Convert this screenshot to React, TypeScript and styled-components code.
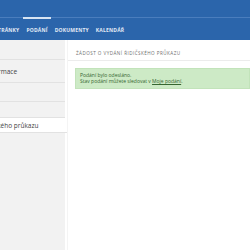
import React from "react";
import styled, { createGlobalStyle } from "styled-components";

const Global = createGlobalStyle`
  html, body { margin: 0; padding: 0; background: #ffffff; overflow: hidden; }
  body { font-family: "Open Sans", "Liberation Sans", sans-serif; }
`;

const Page = styled.div`
  width: 298px;
  margin-left: -48px;
  height: 250px;
  display: flex;
  flex-direction: column;
`;

const Header = styled.header`
  background: #2b65ab;
  display: flex;
  flex-direction: column;
`;

const TopStrip = styled.div`
  height: 17px;
  border-bottom: 1px solid #4a7dbd;
`;

const Nav = styled.nav`
  height: 22px;
  display: flex;
  align-items: stretch;
  padding-left: 17px;
  gap: 1px;
`;

const NavItem = styled.a<{ $active?: boolean }>`
  display: flex;
  align-items: center;
  padding: 0 3px;
  font-size: 5px;
  font-weight: 700;
  letter-spacing: 0.2px;
  color: #e3ebf6;
  text-transform: uppercase;
  border-top: 2px solid ${(p) => (p.$active ? "#d7e4f3" : "transparent")};
  margin-top: -1px;
  white-space: nowrap;
`;

const Body = styled.div`
  flex: 1;
  display: flex;
  min-height: 0;
`;

const Sidebar = styled.aside`
  width: 113px;
  flex: none;
  background: #f2f2f2;
  padding-top: 1px;
  display: flex;
  flex-direction: column;
`;

const SideItem = styled.div<{ $active?: boolean; $h: number }>`
  height: ${(p) => p.$h}px;
  display: flex;
  align-items: center;
  padding-left: 7px;
  font-size: 6.5px;
  color: #444;
  white-space: nowrap;
  background: ${(p) => (p.$active ? "#ffffff" : "transparent")};
  border-bottom: 1px solid #e2e2e2;
  margin-right: ${(p) => (p.$active ? "-3px" : "0")};
`;

const Main = styled.main`
  flex: 1;
  border-left: 1px solid #f4f4f4;
  margin-left: 2px;
  display: flex;
  flex-direction: column;
`;

const Heading = styled.h1`
  margin: 0;
  padding: 5px 0 0 8px;
  height: 15px;
  border-bottom: 1px solid #ececec;
  font-size: 4.6px;
  font-weight: 400;
  letter-spacing: 0.45px;
  color: #6e6e6e;
  text-transform: uppercase;
  white-space: nowrap;
  display: flex;
  align-items: center;
`;

const Alert = styled.div`
  margin: 7px 0 0 7px;
  padding: 3px 4px 4px 4px;
  background: #cdeac6;
  border: 1px solid #c2e3ba;
  color: #356530;
  font-size: 5px;
  line-height: 6px;
  white-space: nowrap;
`;

const AlertLink = styled.a`
  color: #356530;
  text-decoration: underline;
`;

export default function App() {
  return (
    <>
      <Global />
      <Page>
        <Header>
          <TopStrip />
          <Nav>
            <NavItem>Úvodní stránky</NavItem>
            <NavItem $active>Podání</NavItem>
            <NavItem>Dokumenty</NavItem>
            <NavItem>Kalendář</NavItem>
          </Nav>
        </Header>
        <Body>
          <Sidebar>
            <SideItem $h={18}>Úvod</SideItem>
            <SideItem $h={22}>Základní informace</SideItem>
            <SideItem $h={18}>Kontakt</SideItem>
            <SideItem $h={15}>Dotazy</SideItem>
            <SideItem $h={14} $active>
              Vydání řidičského průkazu
            </SideItem>
          </Sidebar>
          <Main>
            <Heading>Žádost o vydání řidičského průkazu</Heading>
            <Alert>
              Podání bylo odesláno.
              <br />
              Stav podání můžete sledovat v <AlertLink>Moje podání</AlertLink>.
            </Alert>
          </Main>
        </Body>
      </Page>
    </>
  );
}
